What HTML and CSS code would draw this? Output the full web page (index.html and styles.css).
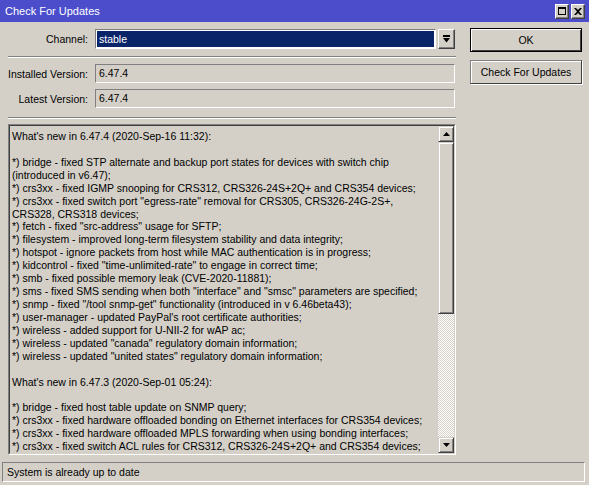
FILE: index.html
```html
<!DOCTYPE html>
<html>
<head>
<meta charset="utf-8">
<link rel="stylesheet" href="styles.css">
</head>
<body>
<div class="window">
  <div class="titlebar">
    <span class="title">Check For Updates</span>
    <div class="tb-btns">
      <span class="tb-btn"><svg width="8" height="8" viewBox="0 0 8 8"><path d="M0 0h8v8H0z M1 2v5h6V2z" fill="#000" fill-rule="evenodd"/></svg></span>
      <span class="tb-btn"><svg width="8" height="7" viewBox="0 0 8 7"><path d="M0 0h2l2 2 2-2h2L5 3.5 8 7H6L4 5 2 7H0l3-3.5z" fill="#000"/></svg></span>
    </div>
  </div>
  <div class="body">
    <div class="main">
      <div class="row channel-row">
        <span class="lbl">Channel:</span>
        <div class="select"><div class="select-inner">stable</div></div>
        <div class="drop-btn"><svg width="7" height="8" viewBox="0 0 7 8"><rect x="0" y="0" width="7" height="2" fill="#000"/><path d="M0 3h7L3.5 7.5z" fill="#000"/></svg></div>
      </div>
      <div class="sep sep-1"></div>
      <div class="row field-row first">
        <span class="lbl">Installed Version:</span>
        <div class="field">6.47.4</div>
      </div>
      <div class="row field-row second">
        <span class="lbl">Latest Version:</span>
        <div class="field">6.47.4</div>
      </div>
      <div class="sep sep-2"></div>
      <div class="textarea">
        <div class="textarea-inner">
          <div class="log">What's new in 6.47.4 (2020-Sep-16 11:32):

*) bridge - fixed STP alternate and backup port states for devices with switch chip
(introduced in v6.47);
*) crs3xx - fixed IGMP snooping for CRS312, CRS326-24S+2Q+ and CRS354 devices;
*) crs3xx - fixed switch port "egress-rate" removal for CRS305, CRS326-24G-2S+,
CRS328, CRS318 devices;
*) fetch - fixed "src-address" usage for SFTP;
*) filesystem - improved long-term filesystem stability and data integrity;
*) hotspot - ignore packets from host while MAC authentication is in progress;
*) kidcontrol - fixed "time-unlimited-rate" to engage in correct time;
*) smb - fixed possible memory leak (CVE-2020-11881);
*) sms - fixed SMS sending when both "interface" and "smsc" parameters are specified;
*) snmp - fixed "/tool snmp-get" functionality (introduced in v 6.46beta43);
*) user-manager - updated PayPal's root certificate authorities;
*) wireless - added support for U-NII-2 for wAP ac;
*) wireless - updated "canada" regulatory domain information;
*) wireless - updated "united states" regulatory domain information;

What's new in 6.47.3 (2020-Sep-01 05:24):

*) bridge - fixed host table update on SNMP query;
*) crs3xx - fixed hardware offloaded bonding on Ethernet interfaces for CRS354 devices;
*) crs3xx - fixed hardware offloaded MPLS forwarding when using bonding interfaces;
*) crs3xx - fixed switch ACL rules for CRS312, CRS326-24S+2Q+ and CRS354 devices;</div>
          <div class="scrollbar">
            <div class="sb-btn"><svg width="7" height="4" viewBox="0 0 7 4"><path d="M3.5 0L7 4H0z" fill="#000"/></svg></div>
            <div class="sb-thumb"></div>
            <div class="sb-track"></div>
            <div class="sb-btn"><svg width="7" height="4" viewBox="0 0 7 4"><path d="M0 0h7L3.5 4z" fill="#000"/></svg></div>
          </div>
        </div>
      </div>
    </div>
    <div class="side">
      <div class="btn btn-default">OK</div>
      <div class="btn btn-check">Check For Updates</div>
    </div>
  </div>
  <div class="status">System is already up to date</div>
</div>
</body>
</html>
```
FILE: styles.css
```css
* { box-sizing: border-box; }
html, body { margin: 0; padding: 0; }
body {
  width: 589px;
  height: 485px;
  background: #d4d0c8;
  font-family: "Liberation Sans", Arial, sans-serif;
  font-size: 10.5px;
  color: #000;
  overflow: hidden;
}
.window { width: 589px; height: 485px; display: flex; flex-direction: column; }

.titlebar {
  height: 22px;
  background: #4b4dcb;
  display: flex;
  align-items: center;
  justify-content: space-between;
  padding: 0 4px 0 5px;
  color: #fff;
  font-size: 11px;
}
.tb-btns { display: flex; gap: 2px; }
.tb-btn {
  width: 14px;
  height: 15px;
  background: #d4d0c8;
  border: 1px solid;
  border-color: #fff #404040 #404040 #fff;
  box-shadow: inset -1px -1px #808080;
  display: flex;
  align-items: center;
  justify-content: center;
}

.body { display: flex; padding-left: 8px; }
.main { width: 448px; display: flex; flex-direction: column; }
.row { display: flex; align-items: center; }
.lbl { width: 80px; text-align: right; flex: none; }
.channel-row { margin-top: 7px; height: 20px; }
.select {
  margin-left: 7px;
  width: 341px;
  height: 20px;
  border: 1px solid;
  border-color: #808080 #fff #fff #808080;
  background: #fff;
  padding: 1px;
}
.select-inner {
  height: 100%;
  background: #0a246a;
  color: #fff;
  padding-left: 2px;
  line-height: 16px;
}
.drop-btn {
  margin-left: 2px;
  width: 17px;
  height: 20px;
  border: 1px solid;
  border-color: #fff #404040 #404040 #fff;
  box-shadow: inset -1px -1px #808080;
  display: flex;
  align-items: center;
  justify-content: center;
}
.sep { height: 2px; border-top: 1px solid #808080; border-bottom: 1px solid #fff; }
.sep-1 { margin-top: 7px; }
.sep-2 { margin-top: 9px; }
.field-row { height: 19px; margin-top: 6px; }
.field {
  margin-left: 7px;
  width: 360px;
  height: 19px;
  border: 1px solid;
  border-color: #808080 #fff #fff #808080;
  padding-left: 3px;
  line-height: 17px;
}
.textarea {
  margin-top: 5px;
  height: 331px;
  border: 1px solid;
  border-color: #808080 #fff #fff #808080;
}
.textarea-inner {
  height: 100%;
  border: 1px solid;
  border-color: #404040 #d4d0c8 #d4d0c8 #404040;
  display: flex;
}
.log {
  flex: 1;
  padding: 4px 0 0 2px;
  white-space: pre;
  line-height: 12.92px;
  overflow: hidden;
}
.scrollbar { width: 16px; display: flex; flex-direction: column; flex: none; }
.sb-btn, .sb-thumb {
  background: #d4d0c8;
  border: 1px solid;
  border-color: #d4d0c8 #404040 #404040 #d4d0c8;
  box-shadow: inset 1px 1px #fff, inset -1px -1px #808080;
}
.sb-btn { height: 16px; display: flex; align-items: center; justify-content: center; flex: none; }
.sb-thumb { height: 172px; flex: none; }
.sb-track {
  flex: 1;
  background: repeating-conic-gradient(#fff 0 25%, #d4d0c8 0 50%) 0 0 / 2px 2px;
}

.side { margin-left: 14px; width: 112px; display: flex; flex-direction: column; }
.btn {
  height: 24px;
  display: flex;
  align-items: center;
  justify-content: center;
  font-size: 10.5px;
  background: #d4d0c8;
}
.btn-default {
  margin-top: 6px;
  border: 1px solid #000;
  box-shadow: inset 1px 1px #fff, inset -1px -1px #404040;
}
.btn-check {
  margin-top: 8px;
  border: 1px solid;
  border-color: #808080 #404040 #404040 #808080;
  box-shadow: inset 1px 1px #fff, 1px 1px #fff;
}

.status {
  margin: 7px 4px 0 2px;
  height: 20px;
  border: 1px solid;
  border-color: #808080 #fff #fff #808080;
  padding-left: 4px;
  line-height: 18px;
}
```
